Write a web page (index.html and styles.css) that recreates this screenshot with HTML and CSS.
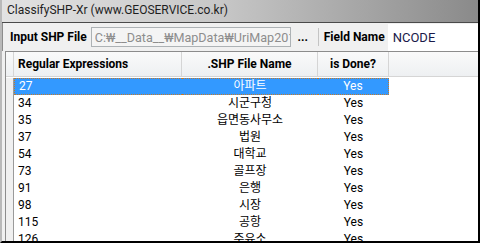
FILE: index.html
```html
<!DOCTYPE html>
<html lang="ko">
<head>
    <meta charset="UTF-8">
    <title>ClassifySHP-Xr</title>
    <link rel="stylesheet" href="styles.css">
</head>
<body>

    <div class="window">
        <div class="title-bar">ClassifySHP-Xr (www.GEOSERVICE.co.kr)</div>

        <div class="toolbar">
            <span class="label">Input SHP File</span>
            <input class="textbox disabled" type="text" value="C:₩__Data__₩MapData₩UriMap2012" disabled>
            <button class="browse">...</button>
            <span class="separator"></span>
            <span class="label">Field Name</span>
            <input class="textbox field" type="text" value="NCODE">
        </div>

        <div class="grid">
            <div class="grid-row header">
                <div class="row-head"></div>
                <div class="cell col-regex">Regular Expressions</div>
                <div class="cell col-file">.SHP File Name</div>
                <div class="cell col-done">is Done?</div>
                <div class="cell col-fill"></div>
            </div>

            <div class="grid-body" id="rows"></div>
        </div>
    </div>

    <script>
        const rows = [
            ['27', '아파트'],
            ['34', '시군구청'],
            ['35', '읍면동사무소'],
            ['37', '법원'],
            ['54', '대학교'],
            ['73', '골프장'],
            ['91', '은행'],
            ['98', '시장'],
            ['115', '공항'],
            ['126', '주유소']
        ];

        const body = document.getElementById('rows');

        // Build the data rows, first one is selected
        rows.forEach(([code, name], i) => {
            const row = document.createElement('div');
            row.className = 'grid-row' + (i === 0 ? ' selected' : '');
            row.innerHTML = `
                <div class="row-head"></div>
                <div class="cell col-regex">${code}</div>
                <div class="cell col-file">${name}</div>
                <div class="cell col-done">Yes</div>
                <div class="cell col-fill"></div>`;
            body.appendChild(row);
        });
    </script>

</body>
</html>
```

FILE: styles.css
```css
* {
    margin: 0;
    padding: 0;
    box-sizing: border-box;
}

body {
    font-family: Roboto, "Noto Sans CJK KR", sans-serif;
    font-size: 12px;
    color: #000;
    background: #fff;
    width: 480px;
    height: 243px;
    overflow: hidden;
}

.window {
    display: flex;
    flex-direction: column;
    height: 243px;
    border-left: 2px solid #b9b9b9;
    border-right: 2px solid #000;
    border-bottom: 2px solid #000;
    background: #f0f0f0;
}

.title-bar {
    height: 23px;
    padding: 3px 0 0 5px;
    font-size: 12px;
    color: #1e1e1e;
    background: linear-gradient(to right, #e2e2e2 0%, #c8c8c8 45%, #8a8a8a 100%);
    border-bottom: 1px solid #4a4a4a;
    white-space: nowrap;
}

.toolbar {
    display: flex;
    align-items: center;
    height: 28px;
    padding-left: 7px;
    background: #f0f0f0;
    border-left: 1px solid #8c8c8c;
}

.label {
    font-weight: bold;
    white-space: nowrap;
}

.textbox {
    display: block;
    height: 20px;
    padding: 0 0 0 3px;
    font-family: inherit;
    outline: none;
    border: none;
}

.textbox.disabled {
    width: 200px;
    margin-left: 4px;
    font-size: 12.6px;
    color: #8d8d8d;
    background: #f4f4f4;
    border: 1px solid #adb2b5;
}

.browse {
    width: 18px;
    height: 20px;
    margin-left: 3px;
    border: none;
    background: transparent;
    font-family: inherit;
    font-size: 12px;
    font-weight: bold;
    color: #000;
    cursor: pointer;
}

.separator {
    width: 1px;
    height: 18px;
    margin: 0 5px 0 6px;
    background: #c4c4c4;
}

.textbox.field {
    flex: 1;
    min-width: 0;
    height: 27px;
    margin-left: 3px;
    padding: 1px 0 0 5px;
    font-size: 13px;
    color: #1a1a4a;
    background: #fff;
}

.grid {
    flex: 1;
    display: flex;
    flex-direction: column;
    margin-left: 3px;
    border-top: 1px solid #8c8c8c;
    border-left: 1px solid #8c8c8c;
    background: #fff;
    overflow: hidden;
}

.grid-row {
    display: flex;
    height: 17px;
    line-height: 17px;
}

.grid-row.header {
    height: 25px;
    line-height: 24px;
    font-weight: bold;
    background: linear-gradient(to bottom, #fafafa, #eef0f2);
    border-bottom: 1px solid #d5d5d5;
}

.grid-body {
    padding-top: 1px;
}

.row-head {
    width: 8px;
    flex-shrink: 0;
    background: #f0f0f0;
    border-right: 1px solid #9a9a9a;
}

.header .row-head {
    background: transparent;
    border-right: 1px solid #d5d5d5;
}

.cell {
    white-space: nowrap;
    overflow: hidden;
}

.col-regex {
    width: 168px;
    padding-left: 4px;
}

.col-file {
    width: 136px;
    text-align: center;
}

.col-done {
    width: 71px;
    text-align: center;
}

.col-fill {
    flex: 1;
}

.header .cell {
    border-right: 1px solid #d5d5d5;
}

.header .col-fill {
    border-right: none;
}

.grid-row.selected .col-regex,
.grid-row.selected .col-file,
.grid-row.selected .col-done {
    background: #3399ff;
    color: #fff;
    border-top: 1px dotted #c47a2a;
    border-bottom: 1px dotted #c47a2a;
    line-height: 15px;
}

.grid-row.selected .col-regex {
    border-left: 1px dotted #c47a2a;
}

.grid-row.selected .col-done {
    border-right: 1px dotted #c47a2a;
}
```
